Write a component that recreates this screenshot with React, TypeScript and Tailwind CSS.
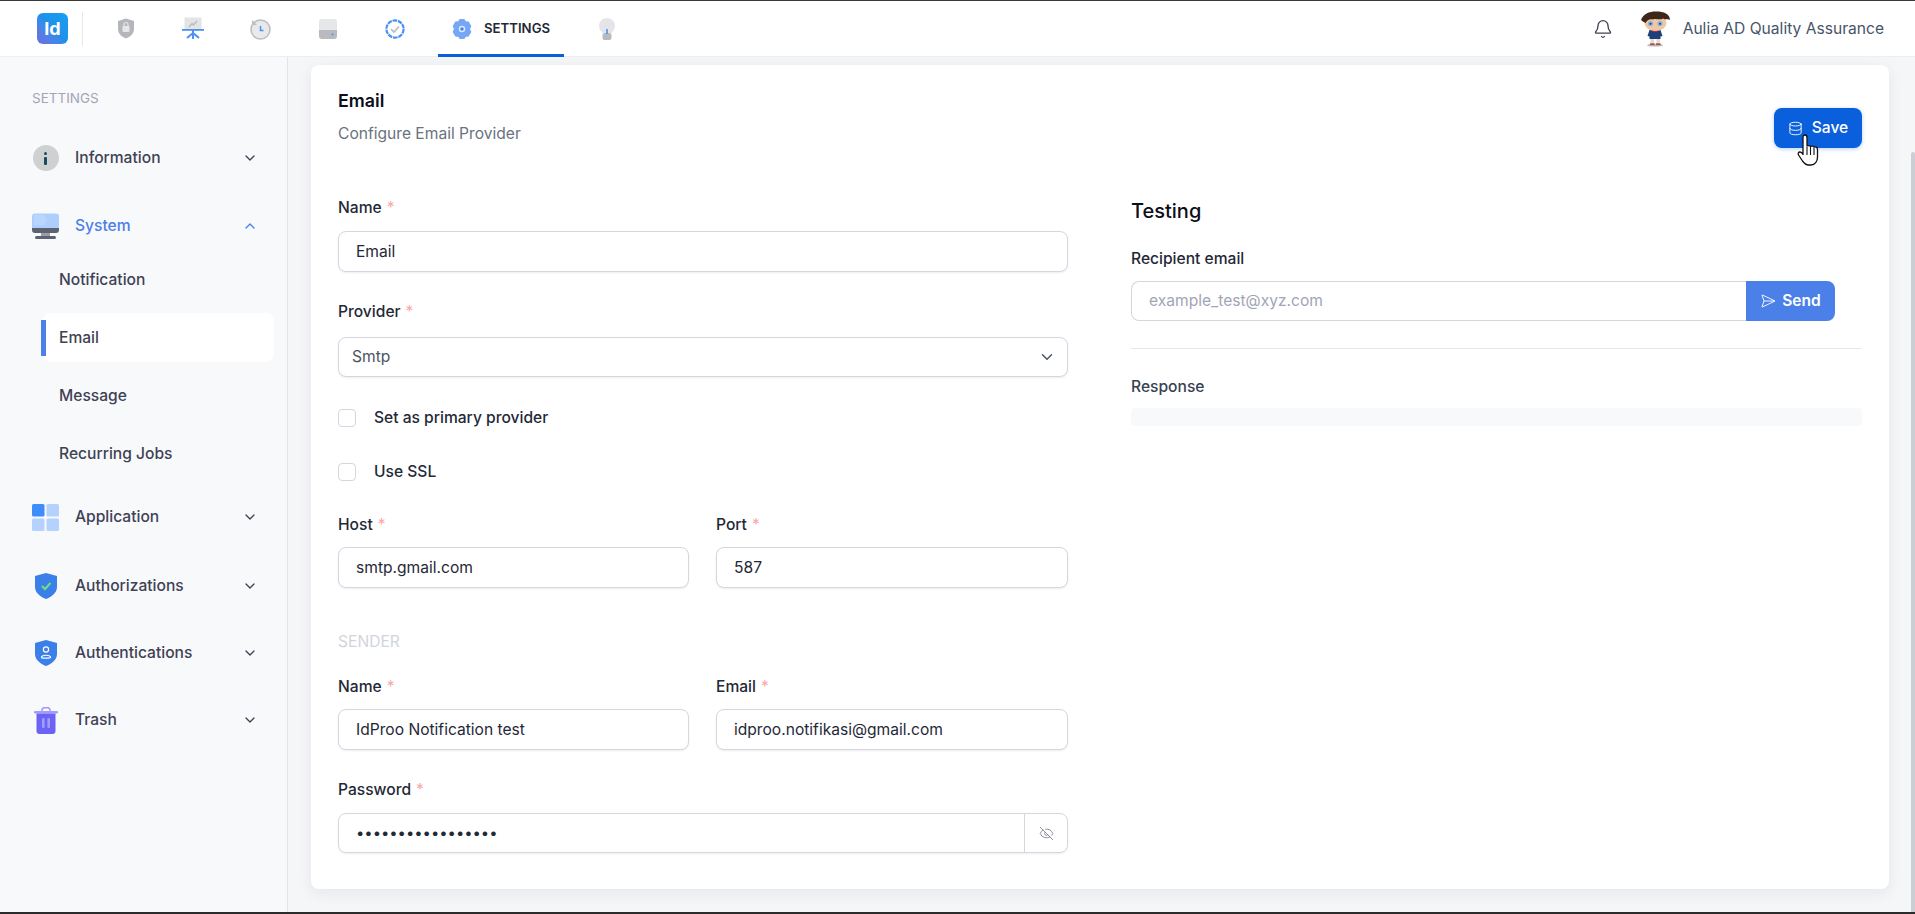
import { Bell, ChevronDown, ChevronUp, Database, EyeOff, SendHorizontal } from 'lucide-react';
import type { ReactNode } from 'react';

const ShieldLock = () => (
  <svg width="18" height="21" viewBox="0 0 18 21">
    <path d="M9 0.5 L17 3 V11 C17 16 13 19 9 20.5 C5 19 1 16 1 11 V3 Z" fill="#b4b6bb" />
    <rect x="5.5" y="8" width="7" height="6" rx="1" fill="#e6e7e9" />
    <path d="M7 8 V6.5 a2 2 0 0 1 4 0 V8" fill="none" stroke="#e6e7e9" strokeWidth="1.2" />
  </svg>
);

const Board = () => (
  <svg width="22" height="23" viewBox="0 0 22 23">
    <rect x="2.5" y="0.5" width="17" height="12" fill="#e3e4e6" />
    <path d="M7 10 L10 6.5 L11.5 8 L15 4" fill="none" stroke="#b9bbc0" strokeWidth="1.4" />
    <rect x="0" y="12" width="22" height="1.8" fill="#4a90f5" />
    <path d="M11 13 V22 M11 16 L5 21 M11 16 L17 21" stroke="#4a90f5" strokeWidth="2" fill="none" />
  </svg>
);

const HistoryIcon = () => (
  <svg width="22" height="22" viewBox="0 0 22 22">
    <circle cx="11.5" cy="11.5" r="9.5" fill="#e8e9eb" stroke="#bcbec3" strokeWidth="1.6" />
    <path d="M3 2 L3 7 L8 7 Z" fill="#bcbec3" />
    <path d="M11.5 8 V12.5 H14.5" fill="none" stroke="#4a90f5" strokeWidth="1.5" />
  </svg>
);

const Drive = () => (
  <svg width="18" height="20" viewBox="0 0 18 20">
    <path d="M3 0 H15 A3 3 0 0 1 18 3 V11 H0 V3 A3 3 0 0 1 3 0 Z" fill="#e6e7e9" />
    <path d="M0 11 H18 V17 A3 3 0 0 1 15 20 H3 A3 3 0 0 1 0 17 Z" fill="#b8bac0" />
    <circle cx="13.5" cy="15.5" r="1" fill="#4a90f5" />
  </svg>
);

const Verified = () => (
  <svg width="20" height="20" viewBox="0 0 20 20">
    <circle cx="10" cy="10" r="8.6" fill="#fff" stroke="#4a90f5" strokeWidth="2.2" strokeDasharray="4.6 0.8" />
    <path d="M6 10.2 L9 13 L14 7.5" fill="none" stroke="#bcbec3" strokeWidth="1.8" />
  </svg>
);

const Gear = () => (
  <svg width="20" height="20" viewBox="0 0 20 20">
    <path
      d="M8 1 H12 L13.4 3.4 L16 3.2 L18.4 7.2 L17 10 L18.4 12.8 L16 16.8 L13.4 16.6 L12 19 H8 L6.6 16.6 L4 16.8 L1.6 12.8 L3 10 L1.6 7.2 L4 3.2 L6.6 3.4 Z"
      fill="#76a7f4"
      stroke="#76a7f4"
      strokeWidth="1.8"
      strokeLinejoin="round"
    />
    <circle cx="10" cy="10" r="3.2" fill="#dce9fd" />
    <circle cx="10" cy="10" r="1.7" fill="#3b82f6" />
  </svg>
);

const Bulb = () => (
  <svg width="16" height="22" viewBox="0 0 16 22">
    <path d="M8 0 A8 8 0 0 1 16 8 C16 11 14 13 12.5 15 H3.5 C2 13 0 11 0 8 A8 8 0 0 1 8 0 Z" fill="#e4e5e8" />
    <rect x="3.5" y="15" width="9" height="7" rx="2" fill="#b8bac0" />
    <rect x="7.2" y="11" width="1.6" height="5" fill="#4a90f5" />
  </svg>
);

const Avatar = () => (
  <svg width="31" height="36" viewBox="0 0 31 36">
    <ellipse cx="15" cy="34.2" rx="8" ry="1.4" fill="#b5b5b5" />
    <rect x="10.5" y="27" width="3.5" height="6" fill="#e4dccb" />
    <rect x="16.5" y="27" width="3.5" height="6" fill="#e4dccb" />
    <rect x="10" y="32.4" width="4.5" height="1.4" fill="#a33" />
    <rect x="16" y="32.4" width="4.5" height="1.4" fill="#a33" />
    <path d="M9.5 19 H20.5 L22.5 25 L20.5 25.5 V28 H9.5 V25.5 L7.5 25 Z" fill="#1f3f7a" />
    <rect x="12.5" y="19" width="5" height="2" fill="#c8242b" />
    <ellipse cx="15.5" cy="12" rx="11" ry="8" fill="#edc7a6" />
    <circle cx="10.5" cy="12.5" r="2.6" fill="#8fb0d8" />
    <circle cx="20" cy="12.5" r="2.6" fill="#8fb0d8" />
    <circle cx="10.5" cy="12.7" r="1" fill="#27405f" />
    <circle cx="20" cy="12.7" r="1" fill="#27405f" />
    <path d="M1 9 C3 3 9 0.5 16 0.5 C24 0.5 30 3 30 9 C27 7.5 26 9 23 7.5 C20 9.5 16 7 13 8.5 C10 7.5 7 9 5.5 12 C3.5 11 2 10 1 9 Z" fill="#3d2718" />
  </svg>
);

const InfoIcon = () => (
  <div className="w-[26px] h-[26px] rounded-full bg-[#cfd0d2] flex flex-col items-center justify-center gap-[2px]">
    <span className="w-[3px] h-[3px] rounded-full bg-[#1c4a63]" />
    <span className="w-[3px] h-[8px] rounded-[1px] bg-[#1c4a63]" />
  </div>
);

const Monitor = () => (
  <svg width="27" height="27" viewBox="0 0 27 27">
    <path d="M3 0.5 H24 A3 3 0 0 1 27 3.5 V15 H0 V3.5 A3 3 0 0 1 3 0.5 Z" fill="#aecffc" />
    <path d="M2 2 H12 L15 7 L12 12 H2 Z" fill="#b9d6fd" />
    <path d="M0 15 H27 V17 A3 3 0 0 1 24 20 H3 A3 3 0 0 1 0 17 Z" fill="#5d6270" />
    <rect x="9" y="20" width="9" height="3" fill="#9a9da6" />
    <rect x="3" y="23" width="21" height="3" rx="1.5" fill="#5d6270" />
  </svg>
);

const Tiles = () => (
  <svg width="27" height="27" viewBox="0 0 27 27">
    <rect width="12.5" height="12.5" rx="1.5" fill="#3f8cfb" />
    <rect x="14.5" width="12.5" height="12.5" rx="1.5" fill="#b4d2fd" />
    <rect y="14.5" width="12.5" height="12.5" rx="1.5" fill="#b4d2fd" />
    <rect x="14.5" y="14.5" width="12.5" height="12.5" rx="1.5" fill="#b4d2fd" />
  </svg>
);

const ShieldPath = 'M11 0 L22 3 V14 C22 20 16 24 11 26 C6 24 0 20 0 14 V3 Z';

const ShieldCheck = () => (
  <svg width="22" height="26" viewBox="0 0 22 26">
    <path d={ShieldPath} fill="#3b7fe8" />
    <path d="M7 13 L10 16 L15.5 10" fill="none" stroke="#6fe07e" strokeWidth="2" />
  </svg>
);

const ShieldUser = () => (
  <svg width="22" height="26" viewBox="0 0 22 26">
    <path d={ShieldPath} fill="#3b7fe8" />
    <circle cx="11" cy="9.5" r="2.6" fill="none" stroke="#fff" strokeWidth="1.2" />
    <path d="M6.5 17.5 C6.5 14.5 15.5 14.5 15.5 17.5 C15.5 18.5 6.5 18.5 6.5 17.5 Z" fill="none" stroke="#fff" strokeWidth="1.2" />
  </svg>
);

const TrashIcon = () => (
  <svg width="24" height="27" viewBox="0 0 24 27">
    <path d="M8 4 V3 A2.5 2.5 0 0 1 10.5 0.7 H13.5 A2.5 2.5 0 0 1 16 3 V4" fill="none" stroke="#a29bfa" strokeWidth="1.6" />
    <rect y="4" width="24" height="2.4" rx="1.2" fill="#a29bfa" />
    <path d="M2.5 6.5 H21.5 V24 A3 3 0 0 1 18.5 27 H5.5 A3 3 0 0 1 2.5 24 Z" fill="#6a63f6" />
    <rect x="8" y="11" width="2.6" height="10" rx="1" fill="#a29bfa" />
    <rect x="13.4" y="11" width="2.6" height="10" rx="1" fill="#a29bfa" />
  </svg>
);

const HandCursor = () => (
  <svg width="24" height="32" viewBox="0 0 24 32">
    <path
      d="M8 1 C9.4 1 10 2 10 3.5 V12 C11 11.3 13 11.5 13.5 12.5 C14.5 11.8 16.5 12 17 13.2 C18.2 12.6 20.5 13 20.5 15.5 V23 C20.5 27.5 18 31 14 31 H11.5 C8.5 31 7 29 5.5 27 L1.5 21 C0.6 19.6 1.4 18 3 18 C4.5 18 5.5 19.5 6 20.5 V3.5 C6 2 6.6 1 8 1 Z"
      fill="#fff"
      stroke="#111"
      strokeWidth="1.3"
      strokeLinejoin="round"
    />
    <path d="M10 13 V21 M13.5 13 V21 M17 14 V21" stroke="#111" strokeWidth="1.1" />
  </svg>
);

const HeaderIcon = ({ center, children }: { center: string; children: ReactNode }) => (
  <div className={`flex items-center justify-center ${center}`}>{children}</div>
);

const MenuItem = ({
  icon,
  label,
  open,
  className,
}: {
  icon: ReactNode;
  label: string;
  open?: boolean;
  className: string;
}) => (
  <div className={`flex items-center h-10 pl-8 pr-[29px] ${className}`}>
    <div className="w-[27px] flex justify-center">{icon}</div>
    <span className={`ml-4 flex-1 text-[15.6px] font-medium ${open ? 'text-[#4a80e8]' : 'text-[#3f4254]'}`}>{label}</span>
    {open ? (
      <ChevronUp className="w-4 h-4 text-[#4a80e8]" />
    ) : (
      <ChevronDown className="w-4 h-4 text-[#3f4254]" />
    )}
  </div>
);

const SubItem = ({ label, active }: { label: string; active?: boolean }) => (
  <div className={`relative h-[49px] ml-[43px] mr-[13px] pl-4 flex items-center rounded-lg text-[15.6px] font-medium text-[#3f4254] ${active ? 'bg-white' : ''}`}>
    {active && <span className="absolute left-[-2px] top-[7px] w-[5px] h-9 bg-[#4a80e8]" />}
    {label}
  </div>
);

const Label = ({ text, required, className = '' }: { text: string; required?: boolean; className?: string }) => (
  <div className={`h-5 flex items-center text-[15.6px] font-medium text-[#1f2937] ${className}`}>
    {text}
    {required && <span className="ml-[5px] text-[#fca5a5] font-normal">*</span>}
  </div>
);

const inputClass =
  'w-full border border-[#d4d7df] rounded-lg shadow-[0_1px_2px_rgba(16,24,40,0.08)] px-[17px] text-[15.6px] text-[#1f2937] bg-white outline-none';

const TextInput = ({ value, className = 'mt-[13px]' }: { value: string; className?: string }) => (
  <input readOnly value={value} className={`${inputClass} h-[41px] block ${className}`} />
);

const Check = ({ label, className }: { label: string; className: string }) => (
  <div className={`flex items-center h-[18px] ${className}`}>
    <span className="w-[18px] h-[18px] rounded border border-[#d4d7df] bg-white" />
    <span className="ml-[18px] text-[15.6px] font-medium text-[#1f2937]">{label}</span>
  </div>
);

export default function App() {
  return (
    <div className="h-screen flex flex-col overflow-hidden border-t border-b-2 border-t-[#3a3a3a] border-b-[#2b2b2b] bg-[#f5f6f8] font-['Inter',sans-serif]">
      {/* Top bar */}
      <header className="h-[56px] shrink-0 bg-white border-b border-[#eceef1] flex items-center pl-[37px] pr-[31px]">
        <div className="w-[31px] h-[31px] rounded-md bg-gradient-to-tr from-[#6d6ae0] via-[#1f90ea] to-[#16a0f0] flex items-center justify-center text-white font-bold text-[18px]">
          Id
        </div>
        <div className="w-px h-[34px] bg-[#e5e7eb] ml-[14px]" />
        <HeaderIcon center="w-[22px] ml-[32px]"><ShieldLock /></HeaderIcon>
        <HeaderIcon center="w-[22px] ml-[45px]"><Board /></HeaderIcon>
        <HeaderIcon center="w-[22px] ml-[45px]"><HistoryIcon /></HeaderIcon>
        <HeaderIcon center="w-[22px] ml-[46px]"><Drive /></HeaderIcon>
        <HeaderIcon center="w-[22px] ml-[45px]"><Verified /></HeaderIcon>
        <div className="relative h-full w-[126px] ml-[32px] flex items-center pl-[14px]">
          <Gear />
          <span className="ml-[12px] text-[13.2px] font-semibold text-[#1f2937]">SETTINGS</span>
          <span className="absolute left-0 right-0 bottom-[-1px] h-[3px] bg-[#0a5fdc]" />
        </div>
        <HeaderIcon center="w-[22px] ml-[32px]"><Bulb /></HeaderIcon>
        <div className="flex-1" />
        <Bell className="w-5 h-5 text-[#3f4254]" strokeWidth={1.6} />
        <div className="ml-[27px] w-[31px] flex justify-center"><Avatar /></div>
        <span className="ml-[12px] text-[15.6px] text-[#475569]">Aulia AD Quality Assurance</span>
      </header>

      <div className="flex flex-1 min-h-0">
        {/* Sidebar */}
        <aside className="w-[288px] shrink-0 bg-[#f8f9fb] border-r border-[#e3e5ea] pt-[31px]">
          <div className="h-5 pl-8 flex items-center text-[13.5px] text-[#a1a5b7]">SETTINGS</div>
          <MenuItem className="mt-[30px]" icon={<InfoIcon />} label="Information" />
          <MenuItem className="mt-7" icon={<Monitor />} label="System" open />
          <div className="mt-[9px] flex flex-col gap-[9px]">
            <SubItem label="Notification" />
            <SubItem label="Email" active />
            <SubItem label="Message" />
            <SubItem label="Recurring Jobs" />
          </div>
          <MenuItem className="mt-[19px]" icon={<Tiles />} label="Application" />
          <MenuItem className="mt-[29px]" icon={<ShieldCheck />} label="Authorizations" />
          <MenuItem className="mt-[27px]" icon={<ShieldUser />} label="Authentications" />
          <MenuItem className="mt-[27px]" icon={<TrashIcon />} label="Trash" />
        </aside>

        {/* Content */}
        <main className="flex-1 min-w-0 pl-[23px] pr-[22px] pt-2">
          <div className="rounded-lg bg-white shadow-[0_4px_16px_rgba(15,23,42,0.07)] px-[27px] pt-[25px] pb-9">
            <div className="flex justify-between items-start">
              <div>
                <h1 className="h-[22px] flex items-center text-[17.8px] font-semibold text-[#0b0f19]">Email</h1>
                <p className="mt-[11px] h-[22px] flex items-center text-[15.6px] text-[#6b7280]">Configure Email Provider</p>
              </div>
              <button className="relative mt-[18px] h-10 w-[88px] rounded-lg bg-[#0a5fdc] text-white text-[15.6px] font-medium flex items-center justify-center gap-[9px] shadow-[0_1px_4px_rgba(10,95,220,0.3)]">
                <Database className="w-[15px] h-[15px]" strokeWidth={1.5} />
                Save
                <span className="absolute left-[23px] top-[26px]"><HandCursor /></span>
              </button>
            </div>

            <div className="flex gap-[63px]">
              {/* Form */}
              <div className="w-[730px] shrink-0">
                <Label className="mt-[50px]" text="Name" required />
                <TextInput value="Email" />
                <Label className="mt-[30px]" text="Provider" required />
                <div className={`${inputClass} mt-[15px] h-10 !pl-[13px] !pr-[11px] flex items-center justify-between !text-[#4b5563]`}>
                  Smtp
                  <ChevronDown className="w-[18px] h-[18px] text-[#4b5563]" />
                </div>
                <Check className="mt-8" label="Set as primary provider" />
                <Check className="mt-9" label="Use SSL" />
                <div className="grid grid-cols-[351px_352px] gap-x-[27px] mt-[34px]">
                  <div>
                    <Label text="Host" required />
                    <TextInput value="smtp.gmail.com" className="mt-3" />
                  </div>
                  <div>
                    <Label text="Port" required />
                    <TextInput value="587" className="mt-3" />
                  </div>
                </div>
                <div className="mt-[44px] h-5 flex items-center text-[15.6px] text-[#d1d5db]">SENDER</div>
                <div className="grid grid-cols-[351px_352px] gap-x-[27px] mt-[25px]">
                  <div>
                    <Label text="Name" required />
                    <TextInput value="IdProo Notification test" className="mt-3" />
                  </div>
                  <div>
                    <Label text="Email" required />
                    <TextInput value="idproo.notifikasi@gmail.com" className="mt-3" />
                  </div>
                </div>
                <Label className="mt-[30px]" text="Password" required />
                <div className="mt-[13px] h-10 flex border border-[#d4d7df] rounded-lg shadow-[0_1px_2px_rgba(16,24,40,0.08)]">
                  <input
                    readOnly
                    type="password"
                    value="idprooNotifikasi1"
                    className="flex-1 min-w-0 px-[17px] text-[14.8px] text-[#1f2937] outline-none rounded-l-lg bg-transparent"
                  />
                  <div className="w-[43px] border-l border-[#d4d7df] flex items-center justify-center">
                    <EyeOff className="w-[15px] h-[15px] text-[#7b8290]" strokeWidth={1.4} />
                  </div>
                </div>
              </div>

              {/* Testing */}
              <div className="flex-1 min-w-0">
                <h2 className="mt-[49px] h-7 flex items-center text-[20px] font-medium text-[#0b0f19]">Testing</h2>
                <Label className="mt-6" text="Recipient email" />
                <div className="mt-3 w-[704px] h-10 flex">
                  <input
                    readOnly
                    placeholder="example_test@xyz.com"
                    className="flex-1 min-w-0 border border-r-0 border-[#d4d7df] rounded-l-lg px-[17px] text-[15.6px] outline-none placeholder:text-[#a1a5b7]"
                  />
                  <button className="w-[89px] rounded-r-lg bg-[#4a80e8] text-white text-[15.6px] font-semibold flex items-center justify-center gap-[6px]">
                    <SendHorizontal className="w-4 h-4" strokeWidth={1.4} />
                    Send
                  </button>
                </div>
                <div className="mt-[27px] h-px bg-[#e5e7eb]" />
                <Label className="mt-[28px] !text-[#374151]" text="Response" />
                <div className="mt-[11px] h-[18px] rounded bg-[#f8f9fb]" />
              </div>
            </div>
          </div>
        </main>

        {/* Scrollbar */}
        <div className="w-1 shrink-0 pt-[95px]">
          <div className="h-full rounded-t-sm bg-[#ccced5]" />
        </div>
      </div>
    </div>
  );
}
